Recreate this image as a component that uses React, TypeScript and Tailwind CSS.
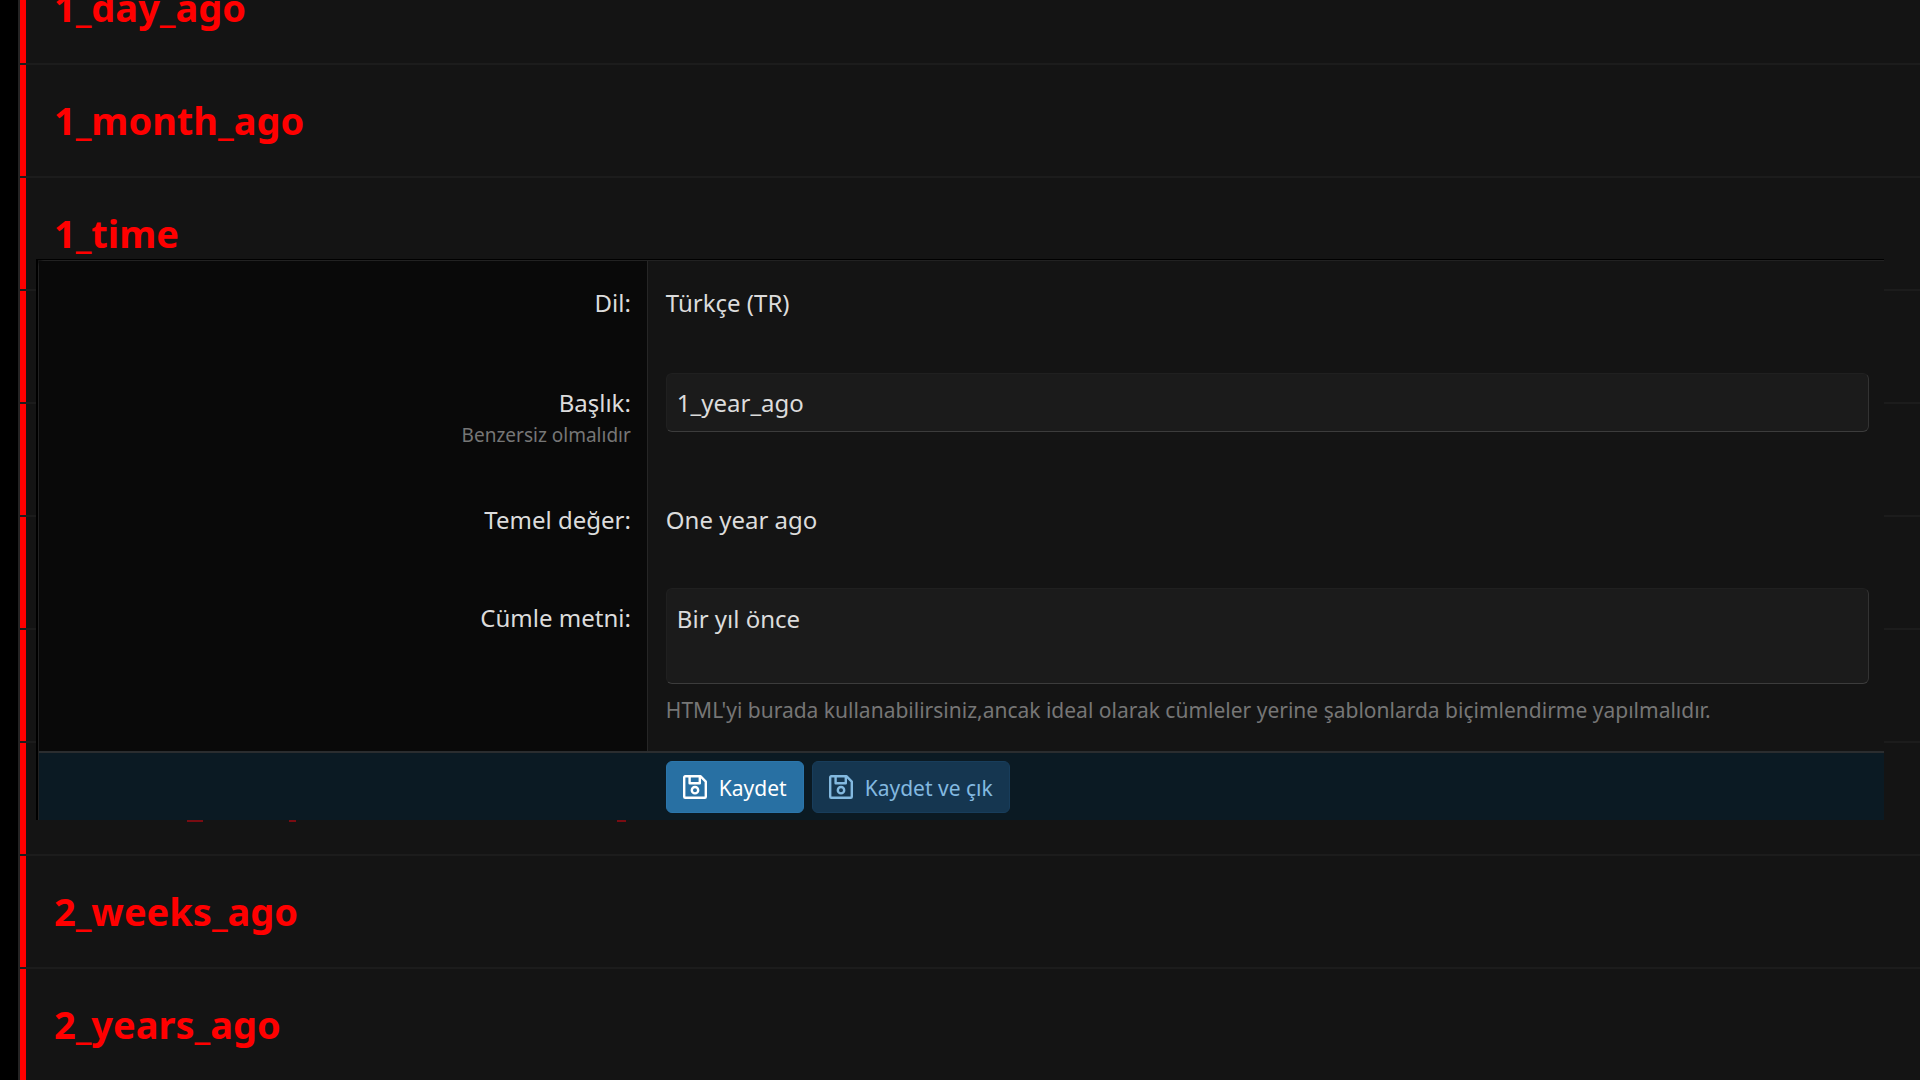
import React from "react";

const phrases = [
  "1_day_ago",
  "1_month_ago",
  "1_time",
  "1_week_ago",
  "1_year_ago",
  "",
  "",
  "",
  "2_weeks_ago",
  "2_years_ago",
];

function SaveIcon() {
  return (
    <svg viewBox="0 0 24 24" fill="none" stroke="currentColor" strokeWidth="2.4" strokeLinejoin="round" className="size-6" aria-hidden="true">
      <path d="M2.2 1.2H17.4L22.8 6.6V21.8a1 1 0 0 1-1 1H2.2a1 1 0 0 1-1-1V2.2a1 1 0 0 1 1-1z" />
      <path d="M6.6 1.2v7h10.2v-7" />
      <circle cx="12" cy="15.2" r="3.2" />
    </svg>
  );
}

type RowProps = {
  label: string;
  htmlFor?: string;
  hint?: string;
  className: string;
  children: React.ReactNode;
};

function FormRow({ label, htmlFor, hint, className, children }: RowProps) {
  return (
    <div className={"grid grid-cols-[33%_1fr] " + className}>
      <div className="border-r border-[#262626] bg-[#090909] pr-4 pt-6 text-right">
        {htmlFor ? <label htmlFor={htmlFor}>{label}</label> : <span>{label}</span>}
        {hint && <p className="text-[19px] leading-7 text-[#767676]">{hint}</p>}
      </div>
      <div className="pl-[18px] pr-[15px]">{children}</div>
    </div>
  );
}

export default function App() {
  const field =
    "block w-full rounded-md border border-[#202020] border-r-[#333] border-b-[#3c3c3c] bg-[#1b1b1b] px-2.5 text-[#dcdcdc] outline-none";
  return (
    <main className="relative h-screen overflow-hidden bg-black pl-[18px] font-['Noto_Sans','Open_Sans',sans-serif]">
      <ul className="-mt-12 border-l-2 border-[#242424] bg-[#141414]">
        {phrases.map((p, i) => (
          <li key={i} className="flex h-[113px] flex-col border-b-2 border-[#1c1c1c]">
            <div className="flex flex-1 items-center border-l-6 border-[#ff0000] pl-7">
              <a href="#" className="pb-0.5 text-[38px] font-bold leading-none text-[#ff0000]">{p}</a>
            </div>
          </li>
        ))}
      </ul>

      <div className="absolute top-[259px] right-9 left-9">
        <form
          onSubmit={(e) => e.preventDefault()}
          className="border-t border-l-2 border-black bg-[#141414] text-[24px] leading-9 text-[#dcdcdc]"
        >
          <div className="rounded-tl-md border-t border-l border-[#222]">
            <FormRow label="Dil:" className="h-[100px]">
              <p className="pt-6">Türkçe (TR)</p>
            </FormRow>
            <FormRow label="Başlık:" htmlFor="title" hint="Benzersiz olmalıdır" className="h-[117px]">
              <input id="title" defaultValue="1_year_ago" className={field + " mt-3 h-[59px]"} />
            </FormRow>
            <FormRow label="Temel değer:" className="h-[98px]">
              <p className="pt-6">One year ago</p>
            </FormRow>
            <FormRow label="Cümle metni:" htmlFor="text" className="h-[175px]">
              <textarea id="text" defaultValue="Bir yıl önce" className={field + " mt-3 h-24 resize-none pt-3"} />
              <p className="pt-3 text-[21px] leading-7 text-[#767676]">
                HTML'yi burada kullanabilirsiniz,ancak ideal olarak cümleler yerine şablonlarda biçimlendirme yapılmalıdır.
              </p>
            </FormRow>
            <div className="grid h-[69px] grid-cols-[33%_1fr] border-t-2 border-[#2b2d2f] bg-[#0b1a23]">
              <div />
              <div className="flex gap-2 pt-2 pl-[18px] text-[21px]">
                <button type="submit" className="flex h-13 items-center gap-3 rounded-md border border-[#2b76ac] bg-[#2870a3] px-4 text-white">
                  <SaveIcon />
                  <span className="pt-0.5">Kaydet</span>
                </button>
                <button type="button" className="flex h-13 items-center gap-3 rounded-md border border-[#183d5b] bg-[#153650] px-4 text-[#83b9e0]">
                  <SaveIcon />
                  <span className="pt-0.5">Kaydet ve çık</span>
                </button>
              </div>
            </div>
          </div>
        </form>
        {/* slivers of the list row that stick out under the panel */}
        <div className="flex h-0.5" aria-hidden="true">
          <span className="ml-[151px] w-4 bg-[#7a0c12]" />
          <span className="ml-[86px] w-[7px] bg-[#7a0c12]" />
          <span className="ml-[321px] w-[9px] bg-[#7a0c12]" />
        </div>
      </div>
    </main>
  );
}
